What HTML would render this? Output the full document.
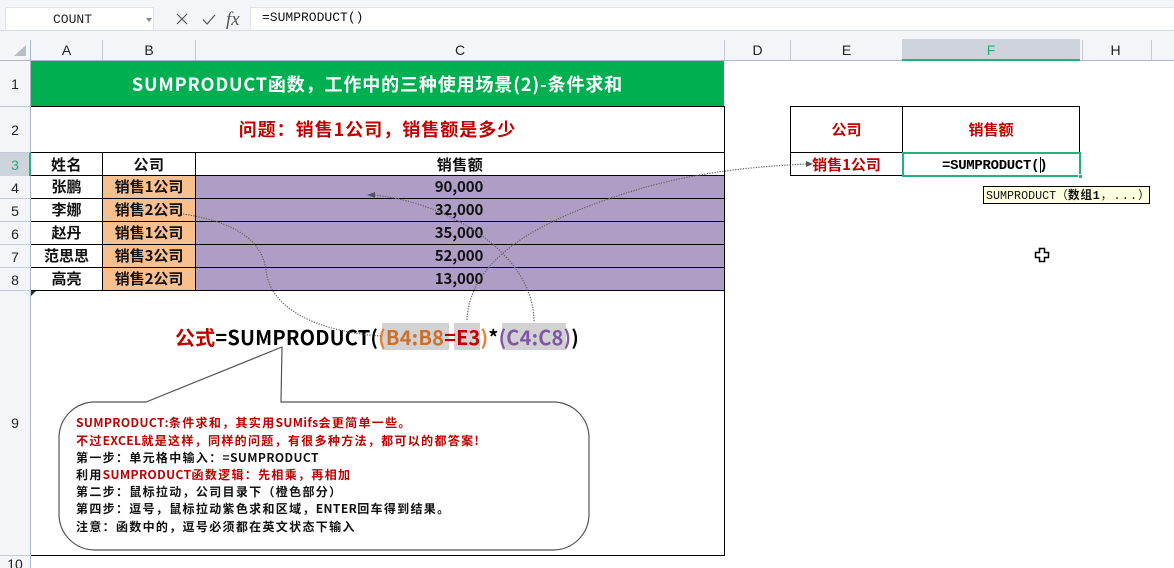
<!DOCTYPE html>
<html><head><meta charset="utf-8"><style>
*{box-sizing:border-box}
html,body{margin:0;padding:0;width:1174px;height:568px;overflow:hidden;background:#fff}
body{position:relative;font-family:"Noto Sans CJK SC","Liberation Sans",sans-serif}
.a{position:absolute}
.c{position:absolute;display:flex;align-items:center;justify-content:center;white-space:nowrap}
.b{font-weight:700}
.h{color:#222;font-size:14px;font-family:"Liberation Sans",sans-serif;top:40px;height:20px}
.r{color:#222;font-size:14px;font-family:"Liberation Sans",sans-serif;left:0;width:30px}
.t{font-size:15px;font-weight:700;color:#111}
.line{position:absolute;background:#000}
.sep{position:absolute;background:#c5cad8}
.n{position:absolute;left:76px;font-size:12px;line-height:17px;font-weight:700;white-space:nowrap;letter-spacing:1.32px;color:#111}
.n i{font-style:normal;letter-spacing:.4px}
.red{color:#c00000}
</style></head><body>
<div class="a" style="left:0;top:0;width:1174px;height:40px;background:#f4f5f8"></div>
<div class="a" style="left:0;top:7px;width:1174px;height:24px;background:#fff;border-top:1px solid #d9dce2;border-bottom:1px solid #d9dce2"></div>
<div class="a" style="left:0;top:0;width:250px;height:38px;background:#f4f5f8"></div>
<div class="a" style="left:5px;top:7px;width:149px;height:24px;background:#fff;border:1px solid #dfe2e8;border-radius:2px"></div>
<div class="c" style="left:5px;top:7px;width:135px;height:25px;font:13px 'Liberation Mono',monospace;color:#222">COUNT</div>
<svg class="a" style="left:146px;top:18px" width="6" height="4"><path d="M0 0H6L3 4Z" fill="#888"/></svg>
<svg class="a" style="left:170px;top:8px" width="80" height="24" fill="none" stroke="#555" stroke-width="1.2">
<path d="M7 6L17 16M17 6L7 16"/><path d="M33 11.500L37 16L45 7"/>
<text x="56" y="17" font-family="Liberation Serif" font-style="italic" font-size="19" fill="#555" stroke="none">fx</text></svg>
<div class="a" style="left:250px;top:7px;width:930px;height:24px;background:#fff;border:1px solid #dfe2e8;border-right:0;border-radius:2px"></div>
<div class="a" style="left:262px;top:10px;font:13px/16px 'Liberation Mono',monospace;color:#111">=SUMPRODUCT()</div>

<!-- headers -->
<div class="a" style="left:0;top:38px;width:1174px;height:22px;background:#f4f5f8"></div>
<div class="a" style="left:0;top:30px;width:1174px;height:1px;background:#d9dce2"></div>
<div class="a" style="left:902px;top:39px;width:178px;height:21px;background:#cfd3db"></div>
<div class="a" style="left:0;top:60px;width:1174px;height:1px;background:#aeb6cb"></div>
<div class="a" style="left:902px;top:59px;width:178px;height:2px;background:#21b37a"></div>
<div class="a" style="left:0;top:61px;width:30px;height:507px;background:#f4f5f8"></div>
<div class="a" style="left:30px;top:40px;width:1px;height:528px;background:#aeb6cb"></div>
<svg class="a" style="left:14px;top:45px" width="13" height="12"><path d="M12 0V11H0Z" fill="#b9bcc2"/></svg>
<div class="c h" style="left:31px;width:71px">A</div>
<div class="c h" style="left:103px;width:92px">B</div>
<div class="c h" style="left:196px;width:528px">C</div>
<div class="c h" style="left:725px;width:65px">D</div>
<div class="c h" style="left:791px;width:111px">E</div>
<div class="c h" style="left:902px;width:178px;color:#1eb07a">F</div>
<div class="c h" style="left:1081px;width:69px">H</div>
<div class="sep" style="left:102px;top:40px;width:1px;height:20px"></div>
<div class="sep" style="left:195px;top:40px;width:1px;height:20px"></div>
<div class="sep" style="left:724px;top:40px;width:1px;height:20px"></div>
<div class="sep" style="left:790px;top:40px;width:1px;height:20px"></div>
<div class="sep" style="left:1082px;top:40px;width:1px;height:20px"></div>
<div class="sep" style="left:1151px;top:40px;width:1px;height:20px"></div>

<div class="c r" style="top:61px;height:46px">1</div>
<div class="c r" style="top:107px;height:46px">2</div>
<div class="a" style="left:0;top:153px;width:30px;height:23px;background:#cfd3db"></div>
<div class="a" style="left:29px;top:152px;width:2px;height:24px;background:#21b37a"></div>
<div class="c r" style="top:153px;height:23px;color:#1eb07a">3</div>
<div class="c r" style="top:176px;height:23px">4</div>
<div class="c r" style="top:199px;height:23px">5</div>
<div class="c r" style="top:222px;height:23px">6</div>
<div class="c r" style="top:245px;height:23px">7</div>
<div class="c r" style="top:268px;height:23px">8</div>
<div class="c r" style="top:291px;height:264px">9</div>
<div class="c r" style="top:556px;height:16px">10</div>
<div class="a" style="left:0;top:106px;width:30px;height:1px;background:#c5cad8"></div>
<div class="a" style="left:0;top:152px;width:30px;height:1px;background:#c5cad8"></div>
<div class="a" style="left:0;top:198px;width:30px;height:1px;background:#c5cad8"></div>
<div class="a" style="left:0;top:221px;width:30px;height:1px;background:#c5cad8"></div>
<div class="a" style="left:0;top:244px;width:30px;height:1px;background:#c5cad8"></div>
<div class="a" style="left:0;top:267px;width:30px;height:1px;background:#c5cad8"></div>
<div class="a" style="left:0;top:290px;width:30px;height:1px;background:#c5cad8"></div>
<div class="a" style="left:0;top:555px;width:30px;height:1px;background:#c5cad8"></div>

<!-- fills -->
<div class="a" style="left:31px;top:61px;width:693px;height:45px;background:#00b050"></div>
<div class="a" style="left:103px;top:176px;width:92px;height:114px;background:#f8bf8f"></div>
<div class="a" style="left:196px;top:176px;width:528px;height:114px;background:#ae9ec5"></div>

<!-- lines -->
<div class="line" style="left:31px;top:106px;width:694px;height:1px"></div>
<div class="line" style="left:31px;top:152px;width:694px;height:1px"></div>
<div class="line" style="left:31px;top:175px;width:694px;height:1px"></div>
<div class="line" style="left:31px;top:198px;width:694px;height:1px"></div>
<div class="line" style="left:31px;top:221px;width:694px;height:1px"></div>
<div class="line" style="left:31px;top:244px;width:694px;height:1px"></div>
<div class="line" style="left:31px;top:267px;width:694px;height:1px"></div>
<div class="line" style="left:31px;top:290px;width:694px;height:1px"></div>
<div class="line" style="left:31px;top:555px;width:694px;height:1px"></div>
<div class="line" style="left:102px;top:152px;width:1px;height:139px"></div>
<div class="line" style="left:195px;top:152px;width:1px;height:139px"></div>
<div class="line" style="left:724px;top:106px;width:1px;height:450px"></div>
<svg class="a" style="left:31px;top:291px" width="5" height="5"><path d="M0 0H5L0 5Z" fill="#1a3a22"/></svg>

<div class="c b" style="left:31px;top:61px;width:693px;height:45px;color:#fff;font-size:18px;letter-spacing:.87px">SUMPRODUCT函数，工作中的三种使用场景(2)-条件求和</div>
<div class="c b red" style="left:31px;top:107px;width:693px;height:44px;font-size:18px;letter-spacing:1px">问题：销售1公司，销售额是多少</div>

<div class="c t" style="left:31px;top:153px;width:71px;height:22px;letter-spacing:.5px">姓名</div>
<div class="c t" style="left:103px;top:153px;width:92px;height:22px;letter-spacing:.5px">公司</div>
<div class="c t" style="left:196px;top:153px;width:528px;height:22px;letter-spacing:.5px">销售额</div>
<div class="c t" style="left:31px;top:175px;width:71px;height:22px">张鹏</div>
<div class="c t" style="left:31px;top:198px;width:71px;height:22px">李娜</div>
<div class="c t" style="left:31px;top:221px;width:71px;height:22px">赵丹</div>
<div class="c t" style="left:31px;top:244px;width:71px;height:22px">范思思</div>
<div class="c t" style="left:31px;top:267px;width:71px;height:22px">高亮</div>
<div class="c t" style="left:103px;top:175px;width:92px;height:22px">销售1公司</div>
<div class="c t" style="left:103px;top:198px;width:92px;height:22px">销售2公司</div>
<div class="c t" style="left:103px;top:221px;width:92px;height:22px">销售1公司</div>
<div class="c t" style="left:103px;top:244px;width:92px;height:22px">销售3公司</div>
<div class="c t" style="left:103px;top:267px;width:92px;height:22px">销售2公司</div>
<div class="c t" style="left:196px;top:175px;width:526px;height:22px;letter-spacing:-.1px">90,000</div>
<div class="c t" style="left:196px;top:198px;width:526px;height:22px;letter-spacing:-.1px">32,000</div>
<div class="c t" style="left:196px;top:221px;width:526px;height:22px;letter-spacing:-.1px">35,000</div>
<div class="c t" style="left:196px;top:244px;width:526px;height:22px;letter-spacing:-.1px">52,000</div>
<div class="c t" style="left:196px;top:267px;width:526px;height:22px;letter-spacing:-.1px">13,000</div>

<!-- right table -->
<div class="line" style="left:790px;top:106px;width:290px;height:1px"></div>
<div class="line" style="left:790px;top:152px;width:290px;height:1px"></div>
<div class="line" style="left:790px;top:175px;width:112px;height:1px"></div>
<div class="line" style="left:790px;top:106px;width:1px;height:70px"></div>
<div class="line" style="left:902px;top:106px;width:1px;height:70px"></div>
<div class="line" style="left:1079px;top:106px;width:1px;height:47px"></div>
<div class="c t red" style="left:791px;top:107px;width:111px;height:44px">公司</div>
<div class="c t red" style="left:903px;top:107px;width:176px;height:44px">销售额</div>
<div class="c t red" style="left:791px;top:153px;width:111px;height:22px">销售1公司</div>
<div class="a" style="left:902px;top:152px;width:179px;height:25px;border:2px solid #21b37a"></div>
<div class="a" style="left:1078px;top:174px;width:5px;height:5px;background:#21b37a;border:1px solid #fff"></div>
<div class="a" style="left:942px;top:158px;font:700 14px/16px 'Liberation Mono',monospace;color:#000;letter-spacing:-.3px">=SUMPRODUCT()</div>
<div class="a" style="left:1040px;top:157px;width:1px;height:16px;background:#000"></div>

<div class="a" style="left:983px;top:186px;width:167px;height:18px;background:#ffffe1;border:1px solid #000;font:11.700px/18px 'Liberation Mono','Noto Sans CJK SC',monospace;color:#111;padding-left:2px;white-space:nowrap">SUMPRODUCT（<b style="letter-spacing:.8px">数组1</b><span style="letter-spacing:1.2px">，...）</span></div>

<svg class="a" style="left:1034px;top:247px" width="16" height="16"><path d="M5.500 1.500H10.500V5.500H14.500V10.500H10.500V14.500H5.500V10.500H1.500V5.500H5.500Z" fill="#fff" stroke="#000" stroke-width="1.500"/></svg>

<!-- formula -->
<div class="a" style="left:382px;top:323px;width:67px;height:27px;background:#d2d2d2"></div>
<div class="a" style="left:454px;top:323px;width:26px;height:27px;background:#d2d2d2"></div>
<div class="a" style="left:502px;top:323px;width:64px;height:27px;background:#d2d2d2"></div>
<div class="a b" style="left:175px;top:321px;font-size:20px;line-height:32px;letter-spacing:.17px;white-space:nowrap;color:#000">
<span class="red">公式</span>=SUMPRODUCT(<span style="color:#ed7d31">(</span><span style="color:#c8702f">B4:B8</span><span class="red">=E3</span><span style="color:#ed7d31">)</span>*<span style="color:#7f55a5">(C4:C8)</span>)</div>

<!-- curves -->
<svg class="a" style="left:0;top:0" width="1174" height="568" fill="none">
<g stroke="#666" stroke-width="1.200" stroke-dasharray="1.300 1.300">
<path d="M183 214C235 222 262 240 266 270C270 310 320 332 381 336"/>
<path d="M372 195C440 200 534 250 534 322"/>
<path d="M467 320C470 250 560 215 620 195C680 175 740 167 808 164"/>
</g>
<path d="M367 195L375 192V198Z" fill="#555"/>
<path d="M813 164L806 161V167Z" fill="#555"/>
<path d="M148 403L282 347L281 402" fill="#fff" stroke="none"/>
<path d="M95 402H146L282 347L281 402H553C573 402 589 418 589 438V514C589 534 573 550 553 550H95C75 550 59 534 59 514V438C59 418 75 402 95 402Z" fill="none" stroke="#555" stroke-width="1.200"/>
</svg>

<div class="n red" style="top:414px"><i>SUMPRODUCT:</i>条件求和，其实用<i>SUMifs</i>会更简单一些。</div>
<div class="n red" style="top:432px">不过<i>EXCEL</i>就是这样，同样的问题，有很多种方法，都可以的都答案!</div>
<div class="n" style="top:449px">第一步：单元格中输入：<i>=SUMPRODUCT</i></div>
<div class="n" style="top:466px">利用<span class="red"><i>SUMPRODUCT</i>函数逻辑：先相乘，再相加</span></div>
<div class="n" style="top:483px">第二步：鼠标拉动，公司目录下（橙色部分）</div>
<div class="n" style="top:500px">第四步：逗号，鼠标拉动紫色求和区域，<i>ENTER</i>回车得到结果。</div>
<div class="n" style="top:518px">注意：函数中的，逗号必须都在英文状态下输入</div>
</body></html>
